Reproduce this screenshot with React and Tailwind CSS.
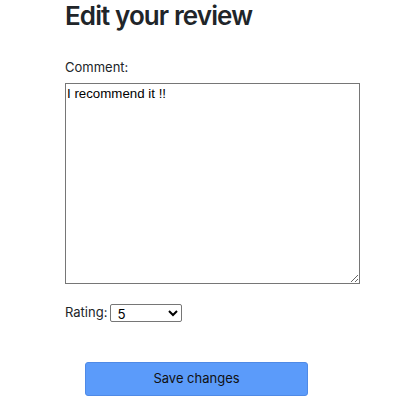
import { useState } from 'react'

export default function App() {
    const [comment, setComment] = useState('I recommend it !!')
    const [rating, setRating] = useState('5')

    return (
        <div className="w-[402px] h-[414px] bg-white text-[#212529] font-['Inter',sans-serif] overflow-hidden">
            <div className="pl-[65px]">
                <h2 className="text-[26px] leading-[32px] font-semibold tracking-[-0.9px]">Edit your review</h2>

                <form className="mt-[26px]" onSubmit={(e) => e.preventDefault()}>
                    <label className="block text-[13px] leading-[18px] text-[#212529]">Comment:</label>
                    <textarea
                        value={comment}
                        onChange={(e) => setComment(e.target.value)}
                        className="mt-[7px] block w-[295px] h-[201px] border border-[#767676] px-[1px] py-[2px] text-[13.3px] leading-[16px] text-black font-['Liberation_Sans',sans-serif] outline-none"
                    />

                    <div className="mt-[19px] flex items-center gap-[3px] text-[13px]">
                        <label>Rating:</label>
                        <select
                            value={rating}
                            onChange={(e) => setRating(e.target.value)}
                            className="w-[72px] h-[18px] border border-[#767676] rounded-[2px] text-[13.3px] leading-[15px] pl-[2px] text-black bg-white"
                        >
                            {[1, 2, 3, 4, 5].map((n) => (
                                <option key={n} value={n}>{n}</option>
                            ))}
                        </select>
                    </div>

                    <button
                        type="submit"
                        className="mt-[39px] ml-[20px] w-[223px] h-[34px] bg-[#5b9bfa] border border-[#4f8ae6] rounded-[3px] text-[13px] text-[#111]"
                    >
                        Save changes
                    </button>
                </form>
            </div>
        </div>
    )
}
